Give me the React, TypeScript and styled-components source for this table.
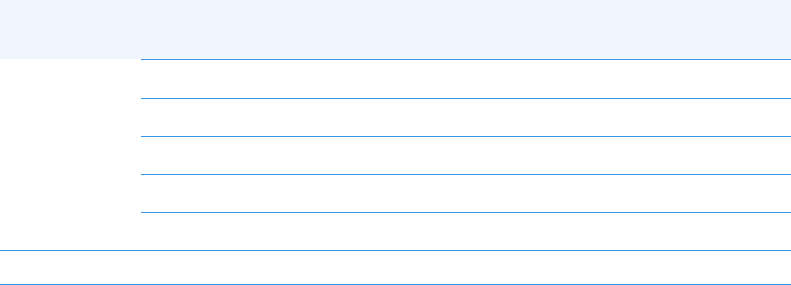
import React from "react";
import styled, { createGlobalStyle } from "styled-components";

const GlobalStyle = createGlobalStyle`
  html, body {
    margin: 0;
    padding: 0;
    background: #ffffff;
    font-family: "Liberation Sans", Arial, sans-serif;
  }
`;

const RULE = "#3b97e6";

const Table = styled.div`
  width: 791px;
  display: grid;
  grid-template-columns: 141px 1fr;
`;

const HeaderBand = styled.div`
  grid-column: 1 / -1;
  height: 59px;
  background: #eff6fe;
`;

const GroupLabel = styled.div`
  border-bottom: 1px solid ${RULE};
`;

const GroupRows = styled.div`
  display: flex;
  flex-direction: column;
  border-top: 1px solid ${RULE};
`;

const Row = styled.div<{ $h: number }>`
  box-sizing: border-box;
  height: ${(p) => p.$h}px;
  border-bottom: 1px solid ${RULE};
`;

const FooterRow = styled.div`
  grid-column: 1 / -1;
  box-sizing: border-box;
  height: 34px;
  border-bottom: 1px solid ${RULE};
`;

const rowHeights = [39, 38, 38, 38, 38];

export default function App() {
  return (
    <>
      <GlobalStyle />
      <Table>
        <HeaderBand />
        <GroupLabel />
        <GroupRows>
          {rowHeights.map((h, i) => (
            <Row key={i} $h={h} />
          ))}
        </GroupRows>
        <FooterRow />
      </Table>
    </>
  );
}
